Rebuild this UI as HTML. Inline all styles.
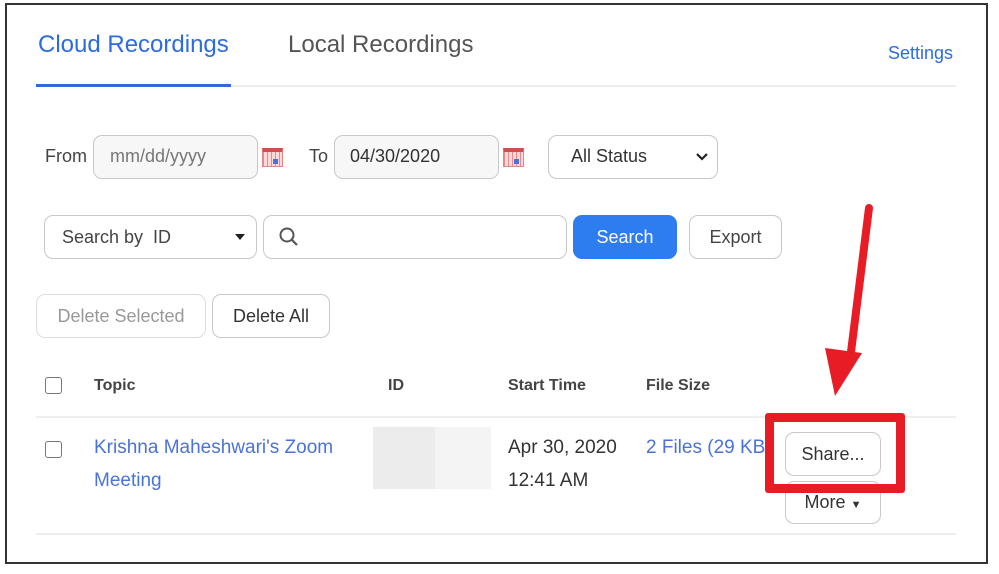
<!DOCTYPE html>
<html><head><style>
*{margin:0;padding:0;box-sizing:border-box}
body{width:999px;height:574px;background:#fff;position:relative;overflow:hidden;font-family:"Liberation Sans",sans-serif;color:#333}
.a{position:absolute;white-space:nowrap}
.box{position:absolute;border:1px solid #c8c8cc;border-radius:9px;background:#fff}
.cal{position:absolute;width:21px;height:19px;background:repeating-linear-gradient(90deg,#e88 0 1px,#fbd9d9 1px 4px),#fbd9d9;border:1px solid #d88;border-top:4px solid #d24d4d}
.cal::after{content:"";position:absolute;right:4px;bottom:2px;width:5px;height:5px;background:#4a73d9}
.chk{position:absolute;width:17px;height:17px;border:1.5px solid #777;border-radius:3px}
</style></head><body>
<div class="a" style="left:5px;top:3px;width:983px;height:561px;border:2px solid #333"></div>
<div class="a" style="left:38px;top:31px;font-size:24px;color:#2d6cdf">Cloud Recordings</div>
<div class="a" style="left:288px;top:31px;font-size:24px;color:#555">Local Recordings</div>
<div class="a" style="left:888px;top:43px;font-size:18px;color:#2d6cdf">Settings</div>
<div class="a" style="left:36px;top:85px;width:920px;height:2px;background:#eee"></div>
<div class="a" style="left:36px;top:84px;width:195px;height:3px;background:#2d6cdf"></div>

<div class="a" style="left:45px;top:146px;font-size:18px;color:#444">From</div>
<div class="box" style="left:93px;top:135px;width:165px;height:44px;background:#f7f7f7"></div>
<div class="a" style="left:110px;top:146px;font-size:18px;color:#777">mm/dd/yyyy</div>
<div class="cal" style="left:262px;top:148px"></div>
<div class="a" style="left:309px;top:146px;font-size:18px;color:#444">To</div>
<div class="box" style="left:334px;top:135px;width:165px;height:44px;background:#f7f7f7"></div>
<div class="a" style="left:350px;top:146px;font-size:18px;color:#333">04/30/2020</div>
<div class="cal" style="left:503px;top:148px"></div>
<div class="box" style="left:548px;top:135px;width:170px;height:44px"></div>
<div class="a" style="left:571px;top:146px;font-size:18px;color:#333">All Status</div>
<svg class="a" style="left:696px;top:152px" width="12" height="10"><path d="M1 2l5 5 5-5" stroke="#222" stroke-width="2.2" fill="none"/></svg>

<div class="box" style="left:44px;top:215px;width:213px;height:44px"></div>
<div class="a" style="left:62px;top:227px;font-size:18px;color:#444">Search by&nbsp; ID</div>
<svg class="a" style="left:235px;top:234px" width="10" height="6"><path d="M0 0h10L5 6z" fill="#222"/></svg>
<div class="box" style="left:263px;top:215px;width:304px;height:44px"></div>
<svg class="a" style="left:278px;top:226px" width="22" height="22"><circle cx="9" cy="9" r="6.5" stroke="#555" stroke-width="2" fill="none"/><path d="M14 14l5 5" stroke="#555" stroke-width="2.2"/></svg>
<div class="a" style="left:573px;top:215px;width:104px;height:44px;background:#2d7cf0;border-radius:9px;color:#fff;font-size:18px;text-align:center;line-height:44px">Search</div>
<div class="box" style="left:689px;top:215px;width:93px;height:44px;text-align:center;line-height:42px;font-size:18px;color:#444">Export</div>

<div class="box" style="left:36px;top:294px;width:170px;height:44px;border-color:#ddd;text-align:center;line-height:42px;font-size:18px;color:#999">Delete Selected</div>
<div class="box" style="left:212px;top:294px;width:118px;height:44px;text-align:center;line-height:42px;font-size:18px;color:#333">Delete All</div>

<div class="chk" style="left:45px;top:377px"></div>
<div class="a" style="left:94px;top:377px;font-size:16px;font-weight:bold;color:#444">Topic</div>
<div class="a" style="left:388px;top:377px;font-size:16px;font-weight:bold;color:#444">ID</div>
<div class="a" style="left:508px;top:377px;font-size:16px;font-weight:bold;color:#444">Start Time</div>
<div class="a" style="left:646px;top:377px;font-size:16px;font-weight:bold;color:#444">File Size</div>
<div class="a" style="left:36px;top:416px;width:920px;height:2px;background:#eee"></div>

<div class="chk" style="left:45px;top:441px"></div>
<div class="a" style="left:94px;top:431px;font-size:19px;color:#4a72d8;line-height:33px;white-space:normal;width:270px">Krishna Maheshwari's Zoom Meeting</div>
<div class="a" style="left:373px;top:427px;width:62px;height:62px;background:#ececec"></div>
<div class="a" style="left:435px;top:427px;width:56px;height:62px;background:#f4f4f5"></div>
<div class="a" style="left:508px;top:431px;font-size:19px;color:#333;line-height:33px">Apr 30, 2020<br>12:41 AM</div>
<div class="a" style="left:646px;top:437px;font-size:19px;color:#4a72d8;line-height:22px;width:120px;overflow:hidden">2 Files (29 KB)</div>
<div class="box" style="left:785px;top:432px;width:96px;height:44px;text-align:center;line-height:42px;font-size:18px;color:#333">Share...</div>
<div class="box" style="left:785px;top:481px;width:96px;height:43px;text-align:center;line-height:40px;font-size:18px;color:#333">More <span style="font-size:11px">&#9660;</span></div>
<div class="a" style="left:36px;top:533px;width:920px;height:2px;background:#eee"></div>

<div class="a" style="left:765px;top:413px;width:140px;height:80px;border:9px solid #e81c24;border-radius:3px"></div>
<svg class="a" style="left:0;top:0" width="999" height="574"><path d="M869 208L851 352" stroke="#e81c24" stroke-width="8" stroke-linecap="round"/><path d="M825 348L862 353L835 396Z" fill="#e81c24"/></svg>
</body></html>
